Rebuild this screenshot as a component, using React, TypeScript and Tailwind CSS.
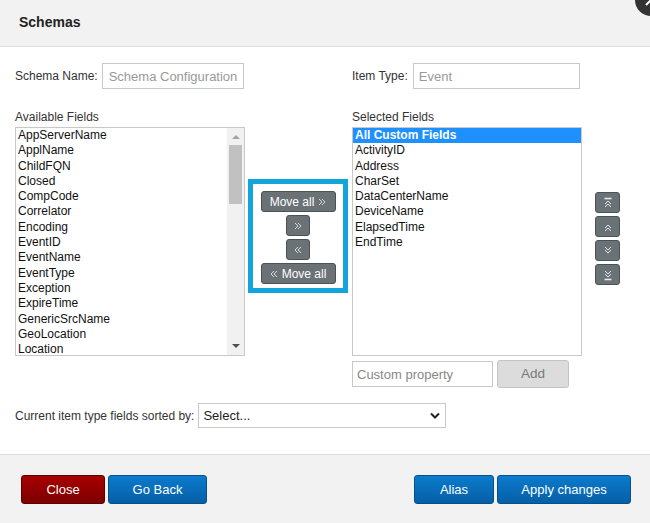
import React from "react";

const available = [
  "AppServerName",
  "ApplName",
  "ChildFQN",
  "Closed",
  "CompCode",
  "Correlator",
  "Encoding",
  "EventID",
  "EventName",
  "EventType",
  "Exception",
  "ExpireTime",
  "GenericSrcName",
  "GeoLocation",
  "Location",
];

const selected = [
  "All Custom Fields",
  "ActivityID",
  "Address",
  "CharSet",
  "DataCenterName",
  "DeviceName",
  "ElapsedTime",
  "EndTime",
];

function Chevrons({ dir, bar }: { dir: "up" | "down"; bar?: boolean }) {
  const rot = dir === "up" ? 0 : 180;
  return (
    <svg width="10" height="12" viewBox="0 0 10 12" className="block" style={{ transform: `rotate(${rot}deg)` }}>
      {bar && <path d="M1.5 1.5H8.5" stroke="#e4e8ea" strokeWidth="1.6" />}
      <path d="M2 7L5 4L8 7M2 10L5 7L8 10" stroke="#e4e8ea" strokeWidth="1" fill="none" />
    </svg>
  );
}

function SmallChevrons({ dir }: { dir: "left" | "right" }) {
  return (
    <svg width="8" height="8" viewBox="0 0 8 8" className="block">
      {dir === "right" ? (
        <path d="M1 1L4 4L1 7M4 1L7 4L4 7" stroke="#d6dadc" strokeWidth="1" fill="none" />
      ) : (
        <path d="M7 1L4 4L7 7M4 1L1 4L4 7" stroke="#d6dadc" strokeWidth="1" fill="none" />
      )}
    </svg>
  );
}

const grayBtn =
  "flex items-center justify-center gap-1 h-[21px] rounded-[3px] border border-[#4b5256] bg-[#6a7276] text-white text-[12px]";
const blueBtn =
  "h-[29px] rounded-[3px] border border-[#05508c] bg-gradient-to-b from-[#0b7bcc] to-[#075fa6] text-white text-[13px]";

export default function App() {
  return (
    <div className="relative w-[650px] h-[523px] overflow-hidden bg-white flex flex-col font-['Liberation_Sans',Arial,sans-serif] text-[#333]">
      {/* close badge */}
      <div className="absolute left-[635px] top-[-16px] w-8 h-8 rounded-full bg-[#333] flex items-center justify-center">
        <svg width="16" height="16" viewBox="0 0 16 16">
          <path d="M3 3L13 13M13 3L3 13" stroke="white" strokeWidth="2" />
        </svg>
      </div>

      {/* header */}
      <div className="h-[47px] shrink-0 bg-[#f2f2f2] border-b border-[#dcdcdc] flex items-center pl-[19px] pb-[2px]">
        <span className="text-[14px] font-bold text-[#222]">Schemas</span>
      </div>

      {/* body */}
      <div className="flex-1 px-[15px] pt-[16px]">
        <div className="flex items-center h-[26px]">
          <div className="w-[337px] flex items-center">
            <span className="text-[12px] mr-[4px]">Schema Name:</span>
            <input
              placeholder="Schema Configuration"
              className="w-[142px] h-[26px] border border-[#c8c8c8] px-[6px] text-[13px] outline-none placeholder:text-[#999]"
            />
          </div>
          <div className="flex items-center">
            <span className="text-[12px] mr-[5px]">Item Type:</span>
            <input
              placeholder="Event"
              className="w-[167px] h-[26px] border border-[#c8c8c8] px-[5px] text-[13px] outline-none placeholder:text-[#999]"
            />
          </div>
        </div>

        <div className="flex mt-[21px]">
          {/* available */}
          <div className="w-[230px]">
            <div className="text-[12px] leading-[14px] mb-[3px]">Available Fields</div>
            <div className="h-[229px] border border-[#c8c8c8] flex">
              <div className="flex-1 overflow-hidden pl-[2px] text-[12px] leading-[15.3px] text-[#111]">
                {available.map((f) => (
                  <div key={f} className="h-[15.3px] whitespace-nowrap">
                    {f}
                  </div>
                ))}
              </div>
              <div className="w-[17px] bg-[#f1f1f1] flex flex-col items-center">
                <div className="h-[17px] flex items-center justify-center">
                  <svg width="8" height="5" viewBox="0 0 8 5">
                    <path d="M0 5L4 1L8 5Z" fill="#a3a3a3" />
                  </svg>
                </div>
                <div className="w-[13px] h-[59px] bg-[#c1c1c1]" />
                <div className="flex-1" />
                <div className="h-[17px] flex items-center justify-center">
                  <svg width="8" height="5" viewBox="0 0 8 5">
                    <path d="M0 0L4 4L8 0Z" fill="#505050" />
                  </svg>
                </div>
              </div>
            </div>
          </div>

          {/* move buttons */}
          <div className="w-[107px] pl-[3px] pt-[69px]">
            <div className="w-[100px] border-[5px] border-[#12a4dd] pt-[7px] pb-[4px] flex flex-col items-center gap-[3px]">
              <button className={`${grayBtn} w-[75px]`}>
                Move all <SmallChevrons dir="right" />
              </button>
              <button className={`${grayBtn} w-[24px]`}>
                <SmallChevrons dir="right" />
              </button>
              <button className={`${grayBtn} w-[24px]`}>
                <SmallChevrons dir="left" />
              </button>
              <button className={`${grayBtn} w-[75px]`}>
                <SmallChevrons dir="left" /> Move all
              </button>
            </div>
          </div>

          {/* selected */}
          <div className="w-[230px]">
            <div className="text-[12px] leading-[14px] mb-[3px]">Selected Fields</div>
            <div className="h-[229px] border border-[#c8c8c8] text-[12px] leading-[15.3px] text-[#111]">
              {selected.map((f, i) => (
                <div
                  key={f}
                  className={
                    i === 0
                      ? "h-[15.3px] pl-[2px] bg-[#1e90ff] text-white font-bold"
                      : "h-[15.3px] pl-[2px]"
                  }
                >
                  {f}
                </div>
              ))}
            </div>
            <div className="flex items-center mt-[4px]">
              <input
                placeholder="Custom property"
                className="w-[141px] h-[26px] border border-[#c8c8c8] px-[4px] text-[13px] outline-none placeholder:text-[#888]"
              />
              <button className="ml-[4px] w-[72px] h-[28px] rounded-[3px] border border-[#c4c4c4] bg-[#dcdcdc] text-[13.5px] text-[#7a7a7a]">
                Add
              </button>
            </div>
          </div>

          {/* order buttons */}
          <div className="pl-[13px] pt-[82px] flex flex-col gap-[3px]">
            <button className={`${grayBtn} w-[25px]`}>
              <Chevrons dir="up" bar />
            </button>
            <button className={`${grayBtn} w-[25px]`}>
              <Chevrons dir="up" />
            </button>
            <button className={`${grayBtn} w-[25px]`}>
              <Chevrons dir="down" />
            </button>
            <button className={`${grayBtn} w-[25px]`}>
              <Chevrons dir="down" bar />
            </button>
          </div>
        </div>

        <div className="flex items-center mt-[15px]">
          <span className="text-[12px] mr-[4px]">Current item type fields sorted by:</span>
          <div className="w-[248px] h-[25px] border border-[#c8c8c8] flex items-center justify-between pl-[4px] pr-[5px] text-[13px] text-[#222]">
            <span>Select...</span>
            <svg width="10" height="7" viewBox="0 0 10 7">
              <path d="M1 1.5L5 5.5L9 1.5" stroke="#222" strokeWidth="2" fill="none" />
            </svg>
          </div>
        </div>
      </div>

      {/* footer */}
      <div className="h-[69px] shrink-0 bg-[#f2f2f2] border-t border-[#dcdcdc] flex items-start justify-between pt-[20px] pl-[21px] pr-[19px]">
        <div className="flex gap-[3px]">
          <button className="w-[84px] h-[29px] rounded-[3px] border border-[#5e0000] bg-gradient-to-b from-[#a80000] to-[#7c0000] text-white text-[13px]">
            Close
          </button>
          <button className={`${blueBtn} w-[99px]`}>Go Back</button>
        </div>
        <div className="flex gap-[3px]">
          <button className={`${blueBtn} w-[80px]`}>Alias</button>
          <button className={`${blueBtn} w-[134px]`}>Apply changes</button>
        </div>
      </div>
    </div>
  );
}
